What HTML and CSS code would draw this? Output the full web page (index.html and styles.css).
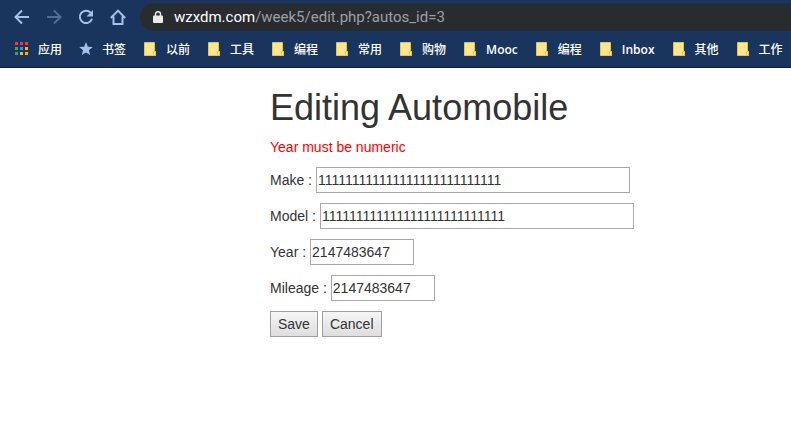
FILE: index.html
```html
<!DOCTYPE html>
<html lang="en">
<head>
<meta charset="utf-8">
<title>Editing Automobile</title>
<link rel="stylesheet" href="styles.css">
</head>
<body>
<svg class="sprite" aria-hidden="true">
  <symbol id="folder" viewBox="0 0 16 16">
    <path d="M2.500 1.500h10v9h1v4h-11z" fill="#ffe591" stroke="#e8c348"/>
    <path d="M11.500 14v-3.500h2v4h-2z" fill="#ffe591" stroke="#e8c348"/>
  </symbol>
</svg>
<header class="browser">
  <div class="toolbar">
    <nav class="nav" aria-label="Browser">
      <button type="button" aria-label="Back"><svg viewBox="0 0 16 16"><path d="M15 8H2M8 1.500 1.500 8 8 14.500"/></svg></button>
      <button type="button" class="dim" aria-label="Forward"><svg viewBox="0 0 16 16"><path d="M1 8h13M8 1.500 14.500 8 8 14.500"/></svg></button>
      <button type="button" aria-label="Reload"><svg viewBox="0 0 16 16"><path d="M12.800 3.800A6.200 6.200 0 1 0 14 9.800"/><path class="solid" d="M15 1v6.500H8.500z"/></svg></button>
      <button type="button" aria-label="Home"><svg viewBox="0 0 16 16"><path d="M0.800 9 8 1.600 15.200 9M3.500 7.500V15h9V7.500"/></svg></button>
    </nav>
    <div class="address">
      <svg class="lock" viewBox="0 0 10 12"><path d="M1 4.500h8a1 1 0 0 1 1 1V11a1 1 0 0 1-1 1H1a1 1 0 0 1-1-1V5.500a1 1 0 0 1 1-1z" fill="#e8eaed"/><path d="M2.500 5V3a2.500 2.300 0 0 1 5 0v2" fill="none" stroke="#e8eaed" stroke-width="1.400"/></svg>
      <span class="url"><span class="host">wzxdm.com</span>/week5/edit.php?autos_id=3</span>
    </div>
  </div>
  <nav class="bookmarks" aria-label="Bookmarks">
    <a href="#"><svg viewBox="0 0 16 16"><path fill="#f33b35" d="M1 1h3v3H1zM6 1h3v3H6zM11 1h3v3h-3z"/><path fill="#3aa757" d="M1 6h3v3H1zM1 11h3v3H1z"/><path fill="#2196f3" d="M6 6h3v3H6z"/><path fill="#fbb20a" d="M11 6h3v3h-3zM6 11h3v3H6zM11 11h3v3h-3z"/></svg>应用</a>
    <a href="#"><svg viewBox="0 0 16 16"><path fill="#a9bfe4" d="M8 1l1.800 4.700 5 .3-3.900 3.200 1.300 4.900L8 11.400l-4.200 2.700 1.300-4.900L1.200 6l5-.3z"/></svg>书签</a>
    <a href="#"><svg><use href="#folder"/></svg>以前</a>
    <a href="#"><svg><use href="#folder"/></svg>工具</a>
    <a href="#"><svg><use href="#folder"/></svg>编程</a>
    <a href="#"><svg><use href="#folder"/></svg>常用</a>
    <a href="#"><svg><use href="#folder"/></svg>购物</a>
    <a href="#" class="latin"><svg><use href="#folder"/></svg>Mooc</a>
    <a href="#"><svg><use href="#folder"/></svg>编程</a>
    <a href="#" class="latin"><svg><use href="#folder"/></svg>Inbox</a>
    <a href="#"><svg><use href="#folder"/></svg>其他</a>
    <a href="#"><svg><use href="#folder"/></svg>工作</a>
  </nav>
</header>
<main class="container">
  <h1>Editing Automobile</h1>
  <p class="error">Year must be numeric</p>
  <form>
    <div class="row"><label for="make">Make :</label><input class="long" id="make" type="text" value="111111111111111111111111111"></div>
    <div class="row"><label for="model">Model :</label><input class="long" id="model" type="text" value="111111111111111111111111111"></div>
    <div class="row"><label for="year">Year :</label><input class="short" id="year" type="text" value="2147483647"></div>
    <div class="row"><label for="mileage">Mileage :</label><input class="short" id="mileage" type="text" value="2147483647"></div>
    <div class="row"><button type="button">Save</button><button type="button">Cancel</button></div>
  </form>
</main>
</body>
</html>
```
FILE: styles.css
```css
* {
  box-sizing: border-box;
}

body {
  margin: 0;
  background: #fff;
  color: #333;
  font: 14px/20px "Liberation Sans", Arial, sans-serif;
}

.sprite {
  position: absolute;
  width: 0;
  height: 0;
}

.browser {
  overflow: hidden;
  background: #1a355d;
  border-bottom: 1px solid #10233f;
  font-family: "Open Sans", "Noto Sans CJK SC", sans-serif;
}

.toolbar {
  display: flex;
  gap: 14px;
  padding: 3px 0 0 14px;
}

.nav {
  display: flex;
  align-items: center;
  gap: 16px;
}

.nav button {
  display: block;
  width: 16px;
  height: 16px;
  padding: 0;
  border: 0;
  background: none;
  color: #a9bfe4;
}

.nav .dim {
  color: #536c94;
}

.nav svg {
  display: block;
  width: 16px;
  height: 16px;
  fill: none;
  stroke: currentColor;
  stroke-width: 2;
}

.nav .solid {
  fill: currentColor;
  stroke: none;
}

.address {
  display: flex;
  flex: 1;
  align-items: center;
  gap: 11px;
  height: 28px;
  padding-left: 13px;
  border-radius: 14px 0 0 14px;
  background: #292c2f;
}

.lock {
  width: 10px;
  height: 12px;
}

.url {
  color: #9aa0a6;
  font-family: Roboto, sans-serif;
  font-size: 15px;
  white-space: nowrap;
}

.host {
  color: #fff;
}

.bookmarks {
  display: flex;
  align-items: center;
  gap: 16px;
  height: 36px;
  padding: 2px 0 0 14px;
}

.bookmarks a {
  display: flex;
  flex: none;
  align-items: center;
  gap: 8px;
  color: #fff;
  font-size: 12px;
  font-weight: 500;
  text-decoration: none;
}

.bookmarks .latin {
  font-weight: 600;
}

.bookmarks svg {
  width: 16px;
  height: 16px;
  margin-bottom: 2px;
}

.container {
  padding: 20px 15px 0 270px;
}

h1 {
  margin: 0 0 10px;
  font-size: 36px;
  font-weight: 500;
  line-height: 39px;
}

.error {
  margin: 0 0 10px;
  color: #f00;
}

.row {
  display: flex;
  align-items: center;
  gap: 4px;
  margin-bottom: 10px;
}

.row input,
.row button {
  height: 26px;
  color: #333;
  font: inherit;
}

.row input {
  padding: 1px;
  border: 1px solid #a9a9a9;
  background: #fff;
}

.long {
  width: 314px;
}

.short {
  width: 104px;
}

.row button {
  padding: 0 7px;
  border: 1px solid #a0a0a0;
  background: linear-gradient(#f6f6f6, #dedede);
}
```
